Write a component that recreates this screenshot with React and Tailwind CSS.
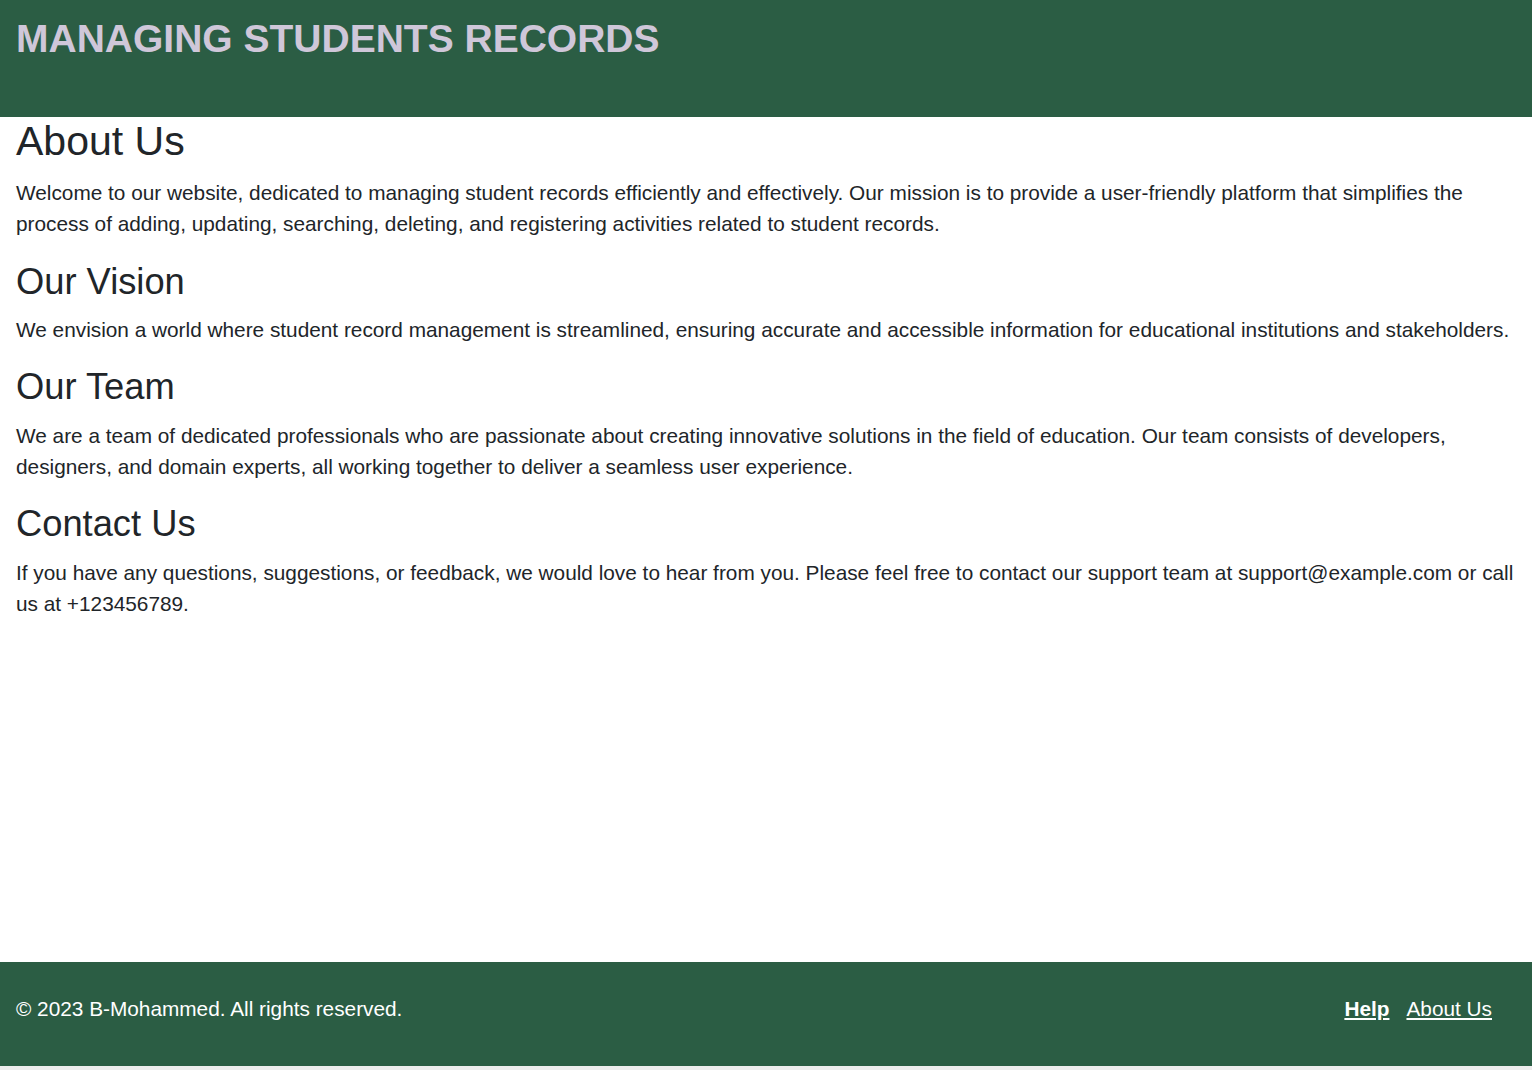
// App.jsx
import React from "react";

const sections = [
  {
    title: "Our Vision",
    body: "We envision a world where student record management is streamlined, ensuring accurate and accessible information for educational institutions and stakeholders.",
  },
  {
    title: "Our Team",
    body: "We are a team of dedicated professionals who are passionate about creating innovative solutions in the field of education. Our team consists of developers, designers, and domain experts, all working together to deliver a seamless user experience.",
  },
  {
    title: "Contact Us",
    body: "If you have any questions, suggestions, or feedback, we would love to hear from you. Please feel free to contact our support team at support@example.com or call us at +123456789.",
  },
];

function Header() {
  return (
    <header className="h-[117px] shrink-0 bg-[#2b5d44] px-[16px] pt-[15px]">
      <h1 className="text-[39px] leading-[47px] font-bold text-[#cfc7d9]">
        MANAGING STUDENTS RECORDS
      </h1>
    </header>
  );
}

function Footer() {
  return (
    <footer className="h-[104px] shrink-0 bg-[#2b5d44] pl-[16px] pr-[40px] pt-[31px] flex items-start justify-between text-white text-[20.8px] leading-[31px]">
      <p>© 2023 B-Mohammed. All rights reserved.</p>
      <nav className="flex gap-[17px]">
        <a href="#" className="font-bold underline">
          Help
        </a>
        <a href="#" className="underline">
          About Us
        </a>
      </nav>
    </footer>
  );
}

export default function App() {
  return (
    <div
      className="h-screen flex flex-col bg-white text-[#212529]"
      style={{ fontFamily: '"Liberation Sans", Arial, sans-serif' }}
    >
      <Header />
      <main className="flex-1 px-[16px]">
        <h2 className="text-[41px] leading-[1.2] mb-[11px]">About Us</h2>
        <p className="text-[20.8px] leading-[31.2px] mb-[20px]">
          Welcome to our website, dedicated to managing student records
          efficiently and effectively. Our mission is to provide a
          user-friendly platform that simplifies the process of adding,
          updating, searching, deleting, and registering activities related to
          student records.
        </p>
        {sections.map((s) => (
          <section key={s.title}>
            <h3 className="text-[36.3px] leading-[1.2] mb-[11px]">
              {s.title}
            </h3>
            <p className="text-[20.8px] leading-[31.2px] mb-[20px]">
              {s.body}
            </p>
          </section>
        ))}
      </main>
      <Footer />
      <div className="h-[4px] shrink-0 bg-[#ededed]" />
    </div>
  );
}
